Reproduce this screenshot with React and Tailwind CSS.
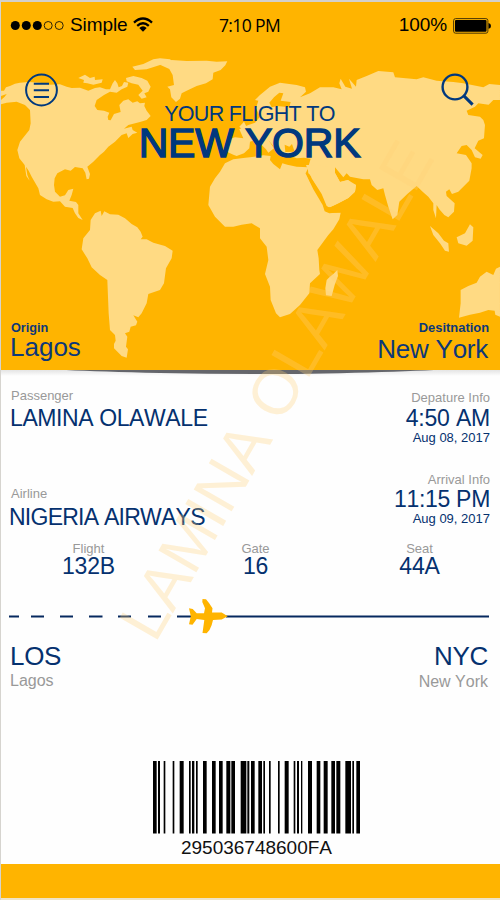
const LAND = "#ffda83";

function WorldMap() {
  return (
    <svg className="absolute inset-0 h-full w-full" viewBox="0 0 500 370" fill={LAND} aria-hidden="true">
      {/* North America and the arctic islands */}
      <g transform="translate(0 50) scale(.3333)">
        <path d="M3 122L12 122 18 112 30 108 45 101 60 98 85 96 120 98 150 104 180 103 200 110 215 114 240 113 265 122 285 114 300 112 318 118 330 118 338 100 345 90 352 100 356 112 366 108 372 96 385 98 382 110 365 118 350 128 330 125 312 135 290 150 284 168 292 180 312 182 328 188 323 200 325 210 332 211 342 192 362 186 358 165 370 152 385 148 398 158 412 154 420 160 435 158 433 168 440 182 452 198 440 210 420 216 385 225 372 236 395 230 398 240 412 248 398 252 385 264 380 250 365 255 345 275 325 290 312 305 300 315 280 335 262 350 270 372 267 386 260 388 256 368 248 355 225 351 212 362 195 358 172 370 164 385 162 405 165 425 180 440 195 436 205 420 220 416 215 435 208 452 228 456 235 465 235 490 248 510 235 504 225 490 218 474 195 470 180 454 160 455 140 448 120 435 115 415 95 380 86 362 78 350 82 375 89 392 79 378 74 345 58 325 52 300 60 275 88 240 92 220 90 180 75 165 50 155 20 158 3 163 3 150 14 140 20 132 3 138Z" />
        <path d="M235 84L255 74 270 84 284 80 285 90 308 88 305 98 280 104 262 100 250 98 252 90ZM378 84L400 78 425 84 442 92 452 110 445 125 433 130 440 142 425 146 415 135 428 122 415 104 395 100 380 94ZM397 50L430 42 460 28 480 25 510 28 520 36 508 42 480 45 440 58 405 60Z" />
      </g>
      {/* Greenland */}
      <path transform="scale(.3333)" d="M480 194L500 188 515 180 560 183 620 182 650 185 682 184 676 196 662 210 640 218 638 238 618 250 590 258 560 272 545 280 540 296 528 306 514 292 510 268 502 260 522 255 518 225 508 207Z" />
      {/* South America */}
      <path transform="translate(0 180) scale(.3333)" d="M272 120L285 100 302 92 305 108 313 94 330 103 355 104 375 115 395 132 412 142 422 155 428 170 422 178 440 178 460 188 495 198 518 212 515 235 498 265 492 310 480 330 445 342 440 370 425 400 415 412 400 406 412 425 408 436 392 440 388 455 375 460 382 470 380 485 378 500 384 508 380 533 365 528 342 505 342 492 347 482 345 465 330 450 326 400 322 300 300 285 275 262 262 235 245 208 250 175 270 150Z" />
      {/* Europe, Asia, Africa */}
      <g transform="translate(200 70) scale(.3333)">
        <path d="M75 280L100 268 130 264 150 262 190 256 212 258 210 270 220 282 240 298 247 280 262 284 290 290 325 292 318 308 330 335 345 360 372 405 376 420 390 428 422 428 418 448 400 478 385 495 352 540 356 565 358 600 360 612 330 640 328 670 300 705 270 732 240 742 228 730 212 690 210 650 195 612 205 570 200 530 180 505 180 475 155 460 125 464 100 470 75 470 45 440 25 405 30 350 45 325 60 305Z" />
        <path d="M376 655L380 630 388 622 400 612 412 600 414 618 404 645 395 678 378 676Z" />
        <path d="M82 246L85 208 105 202 130 205 118 178 145 165 165 158 180 140 168 115 175 92 165 90 180 75 210 50 240 38 290 45 315 52 318 65 300 82 330 70 360 52 400 52 425 58 418 40 422 26 436 50 456 56 447 26 468 50 470 30 500 18 535 3 580 7 585 22 650 28 670 22 710 32 760 36 790 40 850 52 868 42 900 45 900 90 880 90 866 104 850 102 835 100 825 110 800 122 805 135 840 140 850 150 855 165 852 205 835 212 824 235 848 255 842 266 825 262 815 240 800 225 785 228 770 250 798 255 815 280 815 295 808 332 775 365 756 372 748 358 738 365 740 378 764 400 762 425 745 442 733 435 718 418 710 405 708 445 700 420 700 400 685 380 668 365 650 348 622 372 598 395 592 435 578 448 565 410 555 375 550 355 532 360 515 345 510 328 490 328 450 320 440 310 430 322 405 292 403 305 420 336 444 330 452 338 468 345 465 365 445 384 415 400 390 412 380 412 360 370 335 325 325 310 325 290 332 266 312 263 290 265 270 258 250 256 238 248 220 228 205 210 222 235 205 248 198 238 185 225 165 210 150 215 148 235 132 250 110 258 100 254Z" />
        <path d="M318 285H405V325L380 400 330 318Z" />
        <path fill="#ffb400" d="M316 308L328 312 345 338 375 378 384 412 422 404 422 427 388 430 374 424 368 405 340 358Z" />
        <path d="M330 285L405 292 403 305 420 336 444 330 468 345 465 365 445 384 415 400 390 412 380 408 365 372 335 325Z" />
        <path fill="#ffb400" d="M238 68L250 70 242 92 272 96 268 112 232 108 215 112 208 98 222 82ZM256 246L254 224 268 230 276 222 284 245Z" />
        <path d="M118 170L132 155 142 175 132 184Z" />
      </g>
      {/* South-east Asia and Australia */}
      <path transform="translate(250 180) scale(.3333)" d="M540 138L565 160 582 182 595 190 597 215 585 212 570 190 550 165ZM620 172L645 160 660 133 670 142 668 182 650 197 625 190ZM632 330L655 318 680 308 690 290 710 275 730 285 738 266 750 260 750 410 736 404 734 392 715 390 690 398 660 404 627 413 632 370Z" />
    </svg>
  );
}

function StatusBar() {
  return (
    <div className="relative grid h-[47px] grid-cols-3 items-center pr-[9px] pl-[9px] text-[19px] text-black">
      <div className="flex items-center">
        <svg width="54" height="12" viewBox="0 0 54 12">
          <circle cx="5.3" cy="5.5" r="4.5" />
          <circle cx="16.3" cy="5.5" r="4.5" />
          <circle cx="27.3" cy="5.5" r="4.5" />
          <circle cx="38.2" cy="5.5" r="4" fill="none" stroke="#2b2208" />
          <circle cx="49.2" cy="5.5" r="4" fill="none" stroke="#2b2208" />
        </svg>
        <span className="ml-[6px] tracking-[-0.1px]">Simple</span>
        <svg className="ml-[6px] -mt-[3px] shrink-0" width="20" height="15" viewBox="0 0 20 15" fill="none" stroke="black" strokeWidth="2.3">
          <path d="M1 5.6Q10-2.6 19 5.6M4.2 8.9Q10 3.6 15.8 8.9" />
          <path d="M6.3 11Q10 7.4 13.7 11L10 14.8Z" fill="black" stroke="none" />
        </svg>
      </div>
      <div className="pr-[2px] text-center font-['Open_Sans','Noto_Sans',sans-serif] text-[17.5px] tracking-[-0.6px]">7:10 PM</div>
      <div className="flex items-center justify-end">
        <span className="tracking-[-0.1px]">100%</span>
        <svg className="ml-[6px]" width="38" height="16" viewBox="0 0 38 16">
          <rect x=".6" y=".6" width="34.3" height="14.6" rx="2" fill="none" stroke="#4a3604" />
          <rect x="2" y="2" width="31.5" height="11.8" rx="1" />
          <path d="M35.5 5Q38 5.5 38 7.9T35.5 10.8Z" />
        </svg>
      </div>
    </div>
  );
}

function Header() {
  return (
    <header className="relative h-[368px] bg-[#ffb400]">
      <div className="absolute -top-[2px] -left-px h-[370px] w-[500px]">
        <WorldMap />
      </div>
      <StatusBar />
      <div className="relative flex h-[246px] items-start justify-between pt-[24px] pr-[26px] pl-[24px]">
        <svg width="33" height="34" viewBox="0 0 33 34" fill="none" stroke="#00387e" strokeWidth="2">
          <circle cx="16.5" cy="17" r="15.4" />
          <path d="M8.8 10.7H24M8.8 17.2H24M8.8 24H24" />
        </svg>
        <div className="pt-[29px] text-center whitespace-nowrap text-[#00387e]">
          <div className="text-[21.5px] leading-[24px] tracking-[-0.7px]">YOUR FLIGHT TO</div>
          <h1 className="text-[41px] leading-[34px] tracking-[-0.2px] [-webkit-text-stroke:1.4px_#00387e]">NEW YORK</h1>
        </div>
        <svg width="33" height="34" viewBox="0 0 33 34" fill="none" stroke="#00387e" strokeWidth="2.4">
          <circle cx="14" cy="14" r="12.4" />
          <path d="M22.6 22.6L31.6 31.6" strokeWidth="3" />
        </svg>
      </div>
      <div className="relative flex justify-between pt-[25px] pr-[11px] pl-[9px] text-[#0d3879]">
        <div>
          <div className="pl-px text-[12.7px] leading-4 font-bold">Origin</div>
          <div className="text-[26px] leading-[22px]">Lagos</div>
        </div>
        <div className="text-right">
          <div className="text-[12.9px] leading-4 font-bold">Desitnation</div>
          <div className="pt-[2px] pr-px text-[26px] leading-[22px] tracking-[-0.25px]">New York</div>
        </div>
      </div>
    </header>
  );
}

function Stat({ label, value, className }) {
  return (
    <div className={"flex flex-col items-center " + className}>
      <div className="text-[13px] leading-4 text-[#999]">{label}</div>
      <div className="text-[23px] leading-[18px] tracking-[-0.2px] text-[#05316f]">{value}</div>
    </div>
  );
}

function Details() {
  return (
    <section className="relative flex h-[161px] justify-between pr-[10px] pl-[9px] text-[#05316f]">
      <div className="pt-[18px] whitespace-nowrap">
        <div className="pl-px text-[13px] leading-4 text-[#999]">Passenger</div>
        <div className="text-[23px] leading-[28px] tracking-[-0.4px]">LAMINA OLAWALE</div>
        <div className="pt-[54px] pl-px text-[13px] leading-4 text-[#999]">Airline</div>
        <div className="-ml-px pt-px text-[23px] leading-[28px] tracking-[-0.75px]">NIGERIA AIRWAYS</div>
      </div>
      <div className="pt-[20px] text-right whitespace-nowrap">
        <div className="text-[13px] leading-4 text-[#999]">Depature Info</div>
        <div className="text-[23px] leading-[24px] tracking-[-0.2px]">4:50 AM</div>
        <div className="text-[13px] leading-4">Aug 08, 2017</div>
        <div className="pt-[26px] text-[13px] leading-4 text-[#999]">Arrival Info</div>
        <div className="text-[23px] leading-[23px] tracking-[-0.3px]">11:15 PM</div>
        <div className="text-[13px] leading-4">Aug 09, 2017</div>
      </div>
    </section>
  );
}

function Route() {
  return (
    <svg className="mt-[23px] block" width="499" height="36" viewBox="1 598 499 36">
      <path d="M9 616.5H19M31 616.5H44M60 616.5H73M89 616.5H102.500M118 616.500H131M148 616.500H161M177 616.500H192M226 616.500H489" stroke="#06295f" strokeWidth="2.2" />
      <path fill="#ffb400" d="M189 608.300L192.700 609 196.700 613.300 204 613.300 205 608.300 202.300 602 202.500 599 206 599.300 209 603 212.500 608.300 212 612.500 221.700 612.500 227.700 616.200 221.700 619.500 213 620 211.700 625 209.500 630 206.700 633.300 202.500 633 204.300 620 196.700 619 192.500 624.700 189 624.300 190.800 616.200Z" />
    </svg>
  );
}

const BARS = [
  [0, 11], [15, 6], [32, 5], [59, 5], [80, 12], [108, 5], [117, 7], [129, 5], [150, 11], [177, 11], [198, 11],
  [220, 12], [235, 11], [263, 17], [283, 6], [294, 11], [316, 11], [331, 5], [348, 5], [375, 5], [395, 12],
  [422, 5], [432, 6], [444, 4], [465, 12], [491, 11], [512, 12], [535, 11], [550, 12], [577, 17], [598, 5], [610, 11],
];

function Barcode() {
  return (
    <div className="flex flex-col items-center pt-[70px] pl-[12px]">
      <svg width="207" height="73" viewBox="0 0 621 73" preserveAspectRatio="none">
        {BARS.map(([x, w]) => (
          <rect key={x} x={x} width={w} height="72.500" fill="#000" />
        ))}
      </svg>
      <div className="mt-[4px] text-[19px] leading-[20px] text-[#111]">295036748600FA</div>
    </div>
  );
}

export default function App() {
  return (
    <div className="relative flex h-[900px] w-[500px] flex-col overflow-hidden border-t-2 border-l border-t-[#d3d0cb] border-l-[#d6d4cf] bg-[#fefefe] font-['Liberation_Sans',Arial,sans-serif] [font-kerning:none]">
      <Header />
      <div className="relative h-0">
        <div className="absolute inset-x-0 top-0 h-[6px] bg-linear-to-b from-[#e4e4e4] to-[#fefefe]" />
        <svg className="absolute top-0 left-0" width="499" height="7" viewBox="1 370 499 7">
          <path d="M66 370H434Q400 371.700 340 373.200 250 375 160 373 100 371.700 66 370Z" fill="#65666b" />
        </svg>
      </div>
      <Details />
      <section className="flex pt-[10px] pl-[60px]">
        <Stat className="w-[55px]" label="Flight" value="132B" />
        <Stat className="ml-[112px] w-[55px]" label="Gate" value="16" />
        <Stat className="ml-[109px] w-[55px]" label="Seat" value="44A" />
      </section>
      <Route />
      <section className="flex justify-between pt-[10px] pr-[12px] pl-[9px]">
        <div>
          <div className="text-[26px] leading-[24px] tracking-[-0.3px] text-[#05316f]">LOS</div>
          <div className="pt-[4px] text-[16px] leading-[18px] text-[#999]">Lagos</div>
        </div>
        <div className="text-right">
          <div className="text-[26px] leading-[24px] tracking-[-0.3px] text-[#05316f]">NYC</div>
          <div className="pt-[5px] text-[16px] leading-[18px] text-[#999]">New York</div>
        </div>
      </section>
      <Barcode />
      <footer className="mt-auto h-[36px] shrink-0 border-b-2 border-b-[#eee3c8] bg-[#ffb400]" />
      <div className="pointer-events-none absolute top-[585px] left-[154px] origin-[0_57px] -rotate-60 text-[63.5px] leading-[71px] whitespace-nowrap text-[rgba(255,208,120,0.3)]">
        LAMINA OLAWALE
      </div>
    </div>
  );
}
